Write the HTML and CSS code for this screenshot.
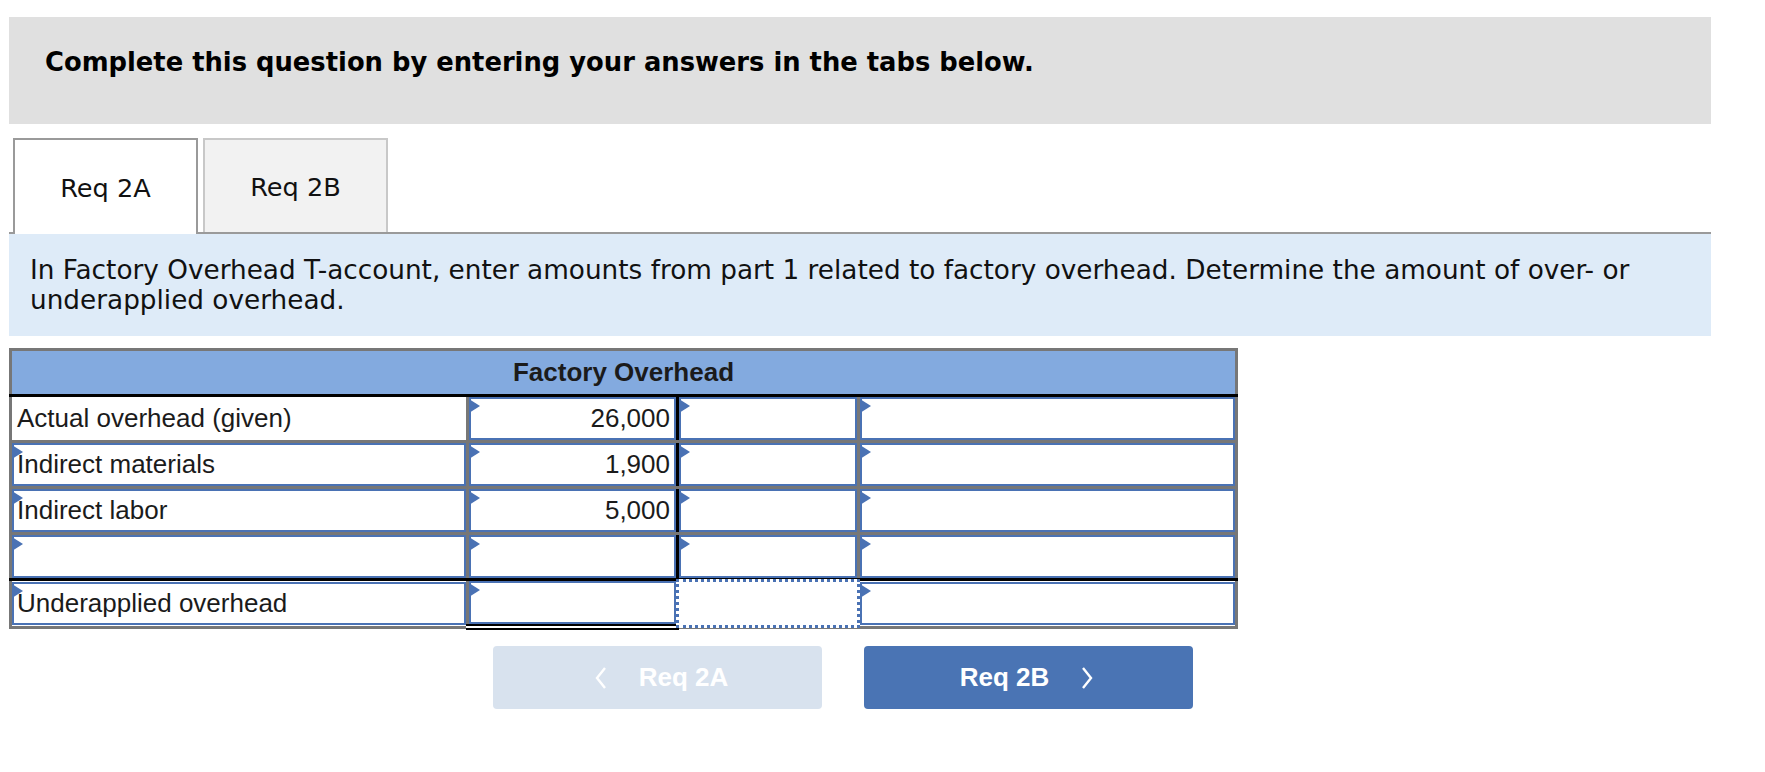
FILE: index.html
```html
<!DOCTYPE html>
<html>
<head>
<meta charset="utf-8">
<link rel="stylesheet" href="styles.css">
</head>
<body>
<div class="page">
  <div class="banner">Complete this question by entering your answers in the tabs below.</div>

  <div class="tabs">
    <div class="tab active">Req 2A</div>
    <div class="tab">Req 2B</div>
  </div>

  <div class="desc">In Factory Overhead T-account, enter amounts from part 1 related to factory overhead. Determine the amount of over- or underapplied overhead.</div>

  <table class="ledger">
    <colgroup><col class="c1"><col class="c2"><col class="c3"><col class="c4"></colgroup>
    <thead>
      <tr><th colspan="4">Factory Overhead</th></tr>
    </thead>
    <tbody>
      <tr>
        <td class="static">Actual overhead (given)</td>
        <td class="mid"><div class="field num tri">26,000</div></td>
        <td><div class="field tri"></div></td>
        <td><div class="field tri"></div></td>
      </tr>
      <tr>
        <td><div class="field tri">Indirect materials</div></td>
        <td class="mid"><div class="field num tri">1,900</div></td>
        <td><div class="field tri"></div></td>
        <td><div class="field tri"></div></td>
      </tr>
      <tr>
        <td><div class="field tri">Indirect labor</div></td>
        <td class="mid"><div class="field num tri">5,000</div></td>
        <td><div class="field tri"></div></td>
        <td><div class="field tri"></div></td>
      </tr>
      <tr class="sep">
        <td><div class="field tri"></div></td>
        <td class="mid"><div class="field num tri"></div></td>
        <td><div class="field tri"></div></td>
        <td><div class="field tri"></div></td>
      </tr>
      <tr>
        <td><div class="field tri">Underapplied overhead</div></td>
        <td class="total"><div class="field num tri"></div></td>
        <td class="focus"><div class="field dotted"></div></td>
        <td><div class="field tri"></div></td>
      </tr>
    </tbody>
  </table>

  <div class="nav">
    <div class="btn prev">
      <svg class="chev" width="12" height="22" viewBox="0 0 12 22"><polyline points="10,1 2,11 10,21" fill="none" stroke="#fff" stroke-width="2.4"/></svg>
      <span>Req 2A</span>
    </div>
    <div class="btn next">
      <span>Req 2B</span>
      <svg class="chev" width="12" height="22" viewBox="0 0 12 22"><polyline points="2,1 10,11 2,21" fill="none" stroke="#fff" stroke-width="2.4"/></svg>
    </div>
  </div>
</div>
</body>
</html>
```

FILE: styles.css
```css
html, body {
  margin: 0;
  padding: 0;
  background: #ffffff;
}

.page {
  margin: 17px 0 0 9px;
  width: 1702px;
  font-family: "DejaVu Sans", Verdana, sans-serif;
  color: #111;
}

.banner {
  box-sizing: border-box;
  height: 107px;
  background: #e0e0e0;
  padding: 30px 0 0 36px;
  font-weight: bold;
  font-size: 25.8px;
  color: #000;
}

.tabs {
  display: flex;
  margin-top: 14px;
  padding-left: 4px;
  border-bottom: 2px solid #9a9a9a;
  height: 94px;
}

.tab {
  box-sizing: border-box;
  width: 185px;
  height: 94px;
  display: flex;
  align-items: center;
  justify-content: center;
  padding-top: 2px;
  font-size: 25.6px;
  color: #111;
  background: #f2f2f2;
  border: 2px solid #c8c8c8;
  border-bottom: none;
  margin-right: 5px;
}

.tab.active {
  background: #fff;
  border-color: #9a9a9a;
  height: 96px;
  margin-bottom: -2px;
  position: relative;
}

.desc {
  box-sizing: border-box;
  height: 102px;
  background: #deebf8;
  padding: 21px 40px 0 21px;
  font-size: 26.3px;
  line-height: 30px;
  color: #111;
}

.ledger {
  margin-top: 12px;
  border-collapse: collapse;
  table-layout: fixed;
  width: 1229px;
  border: 3px solid #777;
  font-family: "Liberation Sans", Arial, sans-serif;
  font-size: 26px;
  color: #1b1b1b;
}

.c1 { width: 457px; }
.c2 { width: 210px; }
.c3 { width: 181px; }
.c4 { width: 378px; }

.ledger th {
  height: 43px;
  padding: 0;
  background: #83aadf;
  font-weight: bold;
  text-align: center;
  vertical-align: middle;
  border-bottom: 3px solid #000;
}

.ledger td {
  padding: 0;
  border: 3px solid #777;
  background: #fff;
  vertical-align: middle;
}

.ledger td.static {
  padding-left: 5px;
  white-space: nowrap;
}

.ledger td.mid {
  border-right: 3px solid #000;
}

.ledger tr.sep td {
  border-bottom: 3px solid #000;
}

.ledger td.total {
  border-bottom: 6px double #000;
}

.field {
  position: relative;
  box-sizing: border-box;
  height: 43px;
  border: 2px solid #4a72b4;
  display: flex;
  align-items: center;
  padding: 0 4px 0 3px;
  white-space: nowrap;
  background: #fff;
}

.field.num {
  justify-content: flex-end;
  padding-right: 4px;
}

.field.tri::before {
  content: "";
  position: absolute;
  left: -2px;
  top: 0;
  width: 0;
  height: 0;
  border-left: 11px solid #4a72b4;
  border-top: 7px solid transparent;
  border-bottom: 7px solid transparent;
}

.field.dotted {
  border: 3px dotted #4a72b4;
  margin: -3px;
  height: 49px;
  z-index: 1;
}

.nav {
  display: flex;
  margin: 16px 0 0 484px;
  gap: 42px;
}

.btn {
  box-sizing: border-box;
  width: 329px;
  height: 63px;
  border-radius: 4px;
  display: flex;
  align-items: center;
  justify-content: center;
  gap: 32px;
  font-family: "Liberation Sans", Arial, sans-serif;
  font-weight: bold;
  font-size: 26px;
  color: #fff;
}

.btn.prev {
  background: #d8e2ee;
  padding-left: 8px;
}

.btn.next {
  background: #4a74b4;
  padding-right: 4px;
}

.chev {
  display: block;
}
```
